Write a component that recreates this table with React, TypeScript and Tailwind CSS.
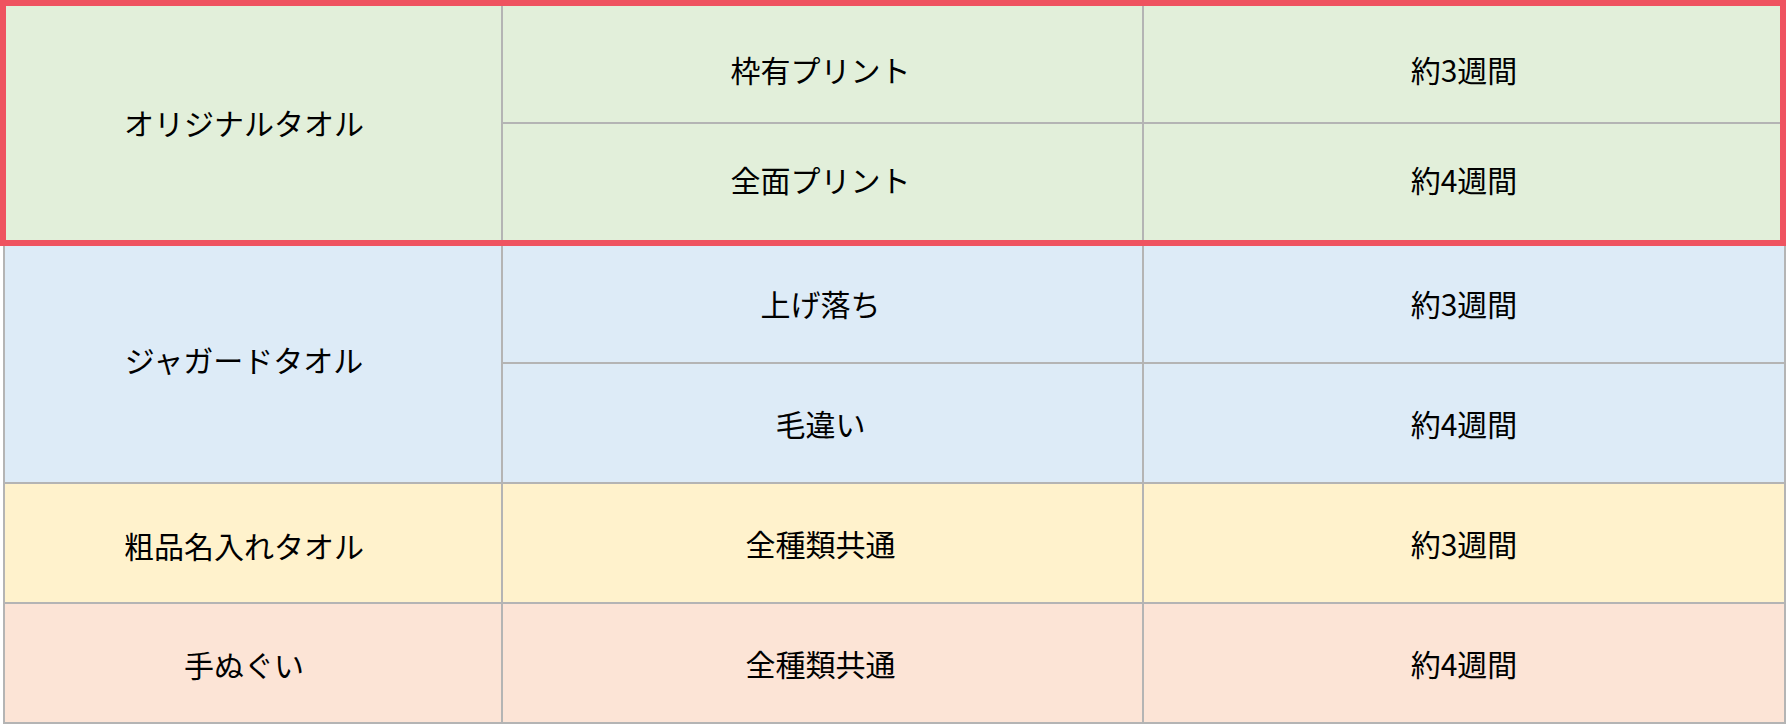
const rows = [
  { group: "オリジナルタオル", span: 2, type: "枠有プリント", term: "約3週間", bg: "bg-[#e2efda]", pad: "pt-[12px]", gpad: "pb-[2px]" },
  { group: null, span: 0, type: "全面プリント", term: "約4週間", bg: "bg-[#e2efda]", pad: "pb-[7px]", gpad: "" },
  { group: "ジャガードタオル", span: 2, type: "上げ落ち", term: "約3週間", bg: "bg-[#ddebf7]", pad: "", gpad: "pb-[8px]" },
  { group: null, span: 0, type: "毛違い", term: "約4週間", bg: "bg-[#ddebf7]", pad: "", gpad: "" },
  { group: "粗品名入れタオル", span: 1, type: "全種類共通", term: "約3週間", bg: "bg-[#fff2cc]", pad: "", gpad: "pt-[4px]" },
  { group: "手ぬぐい", span: 1, type: "全種類共通", term: "約4週間", bg: "bg-[#fce4d6]", pad: "", gpad: "pt-[2px]" },
];

const cell = "border-2 border-[#b4b4b4] text-center align-middle";

export default function App() {
  return (
    <div
      className="relative w-[1786px] h-[724px] bg-white text-black overflow-hidden"
      style={{ fontFamily: '"Noto Sans CJK JP", "Noto Sans", sans-serif' }}
    >
      <div className="pt-[2px] pl-[3px]">
        <table className="table-fixed border-collapse w-[1781px] text-[30px]">
          <colgroup>
            <col className="w-[498px]" />
            <col className="w-[641px]" />
            <col className="w-[642px]" />
          </colgroup>
          <tbody>
            {rows.map((r, i) => (
              <tr key={i} className={`h-[120px] ${r.bg}`}>
                {r.group && (
                  <td rowSpan={r.span} className={`${cell} pr-[18px] ${r.gpad}`}>
                    {r.group}
                  </td>
                )}
                <td className={`${cell} pr-[4px] ${r.pad}`}>{r.type}</td>
                <td className={`${cell} ${r.pad}`}>{r.term}</td>
              </tr>
            ))}
          </tbody>
        </table>
      </div>

      {/* 選択中の枠 */}
      <div className="absolute top-0 left-0 w-[1786px] h-[246px] border-[6px] border-[#ef5360] pointer-events-none" />
    </div>
  );
}
